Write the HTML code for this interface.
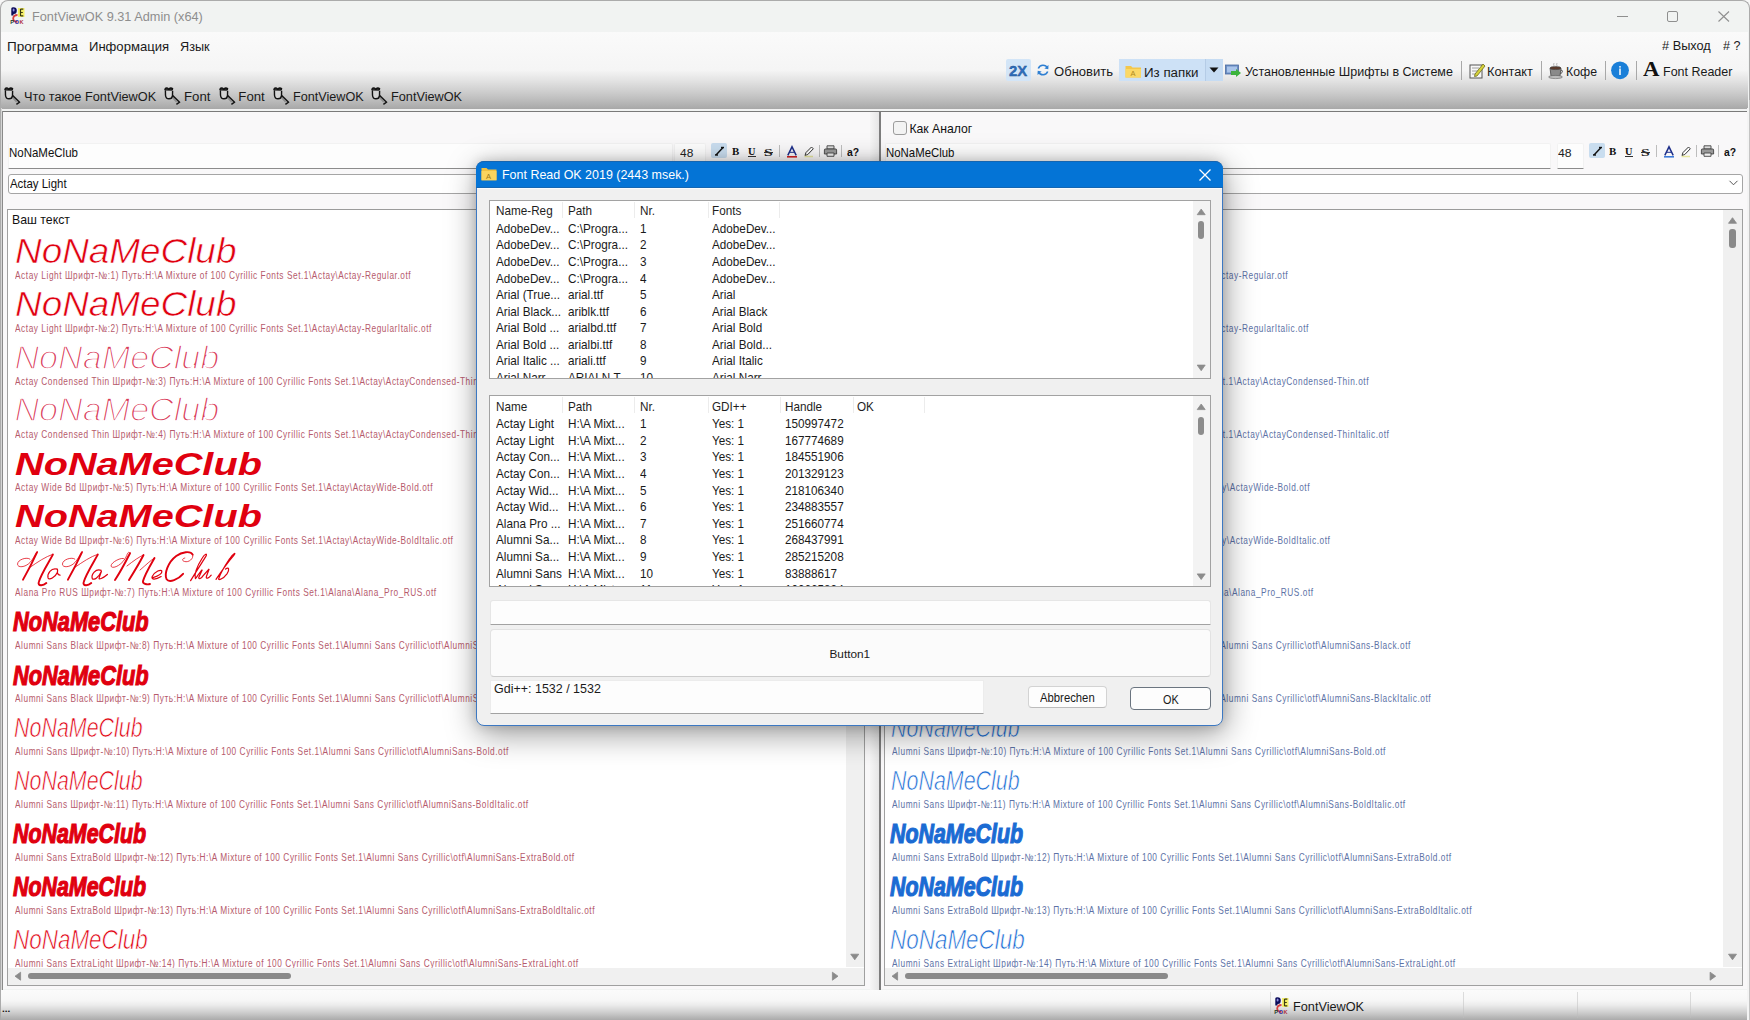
<!DOCTYPE html>
<html><head><meta charset="utf-8"><title>FontViewOK</title>
<style>
html,body{margin:0;padding:0;}
body{width:1750px;height:1020px;overflow:hidden;position:relative;background:#f2f2f2;font-family:'Liberation Sans',sans-serif;}
.t{position:absolute;white-space:pre;}
svg{position:absolute;overflow:visible;}
</style></head><body>
<div style='position:absolute;left:0.00px;top:0.00px;width:1750.00px;height:1020.00px;background:#f7f7f7;'></div>
<div style='position:absolute;left:0.00px;top:0.00px;width:1750.00px;height:1020.00px;border:1px solid #ababab;border-bottom:none;border-radius:8px 8px 0 0;box-sizing:border-box;background:#f1f3f2;'></div>
<div style='position:absolute;left:1.00px;top:32.00px;width:1747.00px;height:76.70px;background:linear-gradient(to bottom,#fafafa 0px,#f5f5f5 38px,#e4e4e4 48px,#cdcdcd 60px,#b8b8b8 70px,#a8a8a8 76.7px);'></div>
<div style='position:absolute;left:1.00px;top:108.70px;width:1747.00px;height:1.30px;background:#f2f2f2;'></div>
<div style='position:absolute;left:2.00px;top:110.50px;width:1745.50px;height:1.50px;background:#7a7a7a;'></div>
<svg style='left:9.5px;top:6.8px' width='17' height='18' viewBox='0 0 17 18'>
<path d='M1.3 8.5 L1.3 1.5 Q1.3 0.2 3.5 0.2 Q6.8 0.2 6.8 3.5 Q6.8 7 3.8 7 L3.5 7 L3.5 8.5 Z' fill='#0c0c5a'/>
<ellipse cx='3.6' cy='3' rx='1' ry='1.6' fill='#8f8fe0'/>
<rect x='8' y='1' width='6.5' height='9' fill='#f5f06a'/>
<path d='M10.5 2 L10.5 9 M10.5 2.2 L13.3 2.2 M10.5 5.5 L12.8 5.5 M10.5 8.8 L13.3 8.8' stroke='#3a3a10' stroke-width='1.2'/>
<path d='M7.5 8 Q3.2 8 3.2 11.5 Q3.2 15 7.5 14.8' stroke='#d84040' stroke-width='1.8' fill='none'/>
<text x='0.2' y='17.3' font-size='5.6' font-family='Liberation Sans' font-weight='700' fill='#1a3a2a'>P</text>
<text x='4.8' y='17.3' font-size='5.6' font-family='Liberation Sans' font-weight='700' fill='#2a2aa0'>O</text>
<text x='9.6' y='17.3' font-size='5.6' font-family='Liberation Sans' font-weight='700' fill='#b03040'>K</text>
</svg>
<div class=t style="left:31.98px;top:10px;font-size:13.37px;line-height:13.37px;color:#8e8e8e;font-family:'Liberation Sans',sans-serif;transform:scaleX(0.9520);transform-origin:0 0;">FontViewOK 9.31 Admin (x64)</div>
<div style='position:absolute;left:1617.00px;top:16.00px;width:11.00px;height:1.00px;background:#8f8f8f;'></div>
<div style='position:absolute;left:1666.50px;top:11.20px;width:11.10px;height:10.60px;border:1px solid #8f8f8f;border-radius:2px;box-sizing:border-box;'></div>
<svg style='left:1718px;top:11px' width='12' height='11' viewBox='0 0 12 11'><path d='M0.5 0.5 L11 10.5 M11 0.5 L0.5 10.5' stroke='#8f8f8f' stroke-width='1.1' fill='none'/></svg>
<div class=t style="left:7.22px;top:41px;font-size:12.52px;line-height:12.52px;color:#1a1a1a;font-family:'Liberation Sans',sans-serif;transform:scaleX(1.0815);transform-origin:0 0;">Программа</div>
<div class=t style="left:89.25px;top:41px;font-size:12.52px;line-height:12.52px;color:#1a1a1a;font-family:'Liberation Sans',sans-serif;transform:scaleX(1.0445);transform-origin:0 0;">Информация</div>
<div class=t style="left:180.29px;top:41px;font-size:12.52px;line-height:12.52px;color:#1a1a1a;font-family:'Liberation Sans',sans-serif;transform:scaleX(1.0101);transform-origin:0 0;">Язык</div>
<div class=t style="left:1662.40px;top:40px;font-size:12.52px;line-height:12.52px;color:#1a1a1a;font-family:'Liberation Sans',sans-serif;transform:scaleX(1.0183);transform-origin:0 0;"># Выход</div>
<div class=t style="left:1723.00px;top:40px;font-size:12.52px;line-height:12.52px;color:#1a1a1a;font-family:'Liberation Sans',sans-serif;transform:scaleX(1.0030);transform-origin:0 0;"># ?</div>
<div style='position:absolute;left:1006.20px;top:59.00px;width:25.30px;height:22.00px;background:#d3e5f7;border-radius:2px;'></div>
<div class=t style="left:1008.85px;top:63px;font-size:15.50px;line-height:15.50px;color:#2f6fc0;font-family:'Liberation Sans',sans-serif;font-weight:700;transform:scaleX(0.9570);transform-origin:0 0;-webkit-text-stroke:0.4px #24508a;">2X</div>
<svg style='left:1036px;top:63px' width='14' height='14' viewBox='0 0 14 14'>
<path d='M11.5 5.2 A5 5 0 0 0 2.3 5.5' stroke='#2f7fd2' stroke-width='1.6' fill='none'/>
<path d='M2.5 8.8 A5 5 0 0 0 11.7 8.5' stroke='#2f7fd2' stroke-width='1.6' fill='none'/>
<path d='M12.5 2 L12.3 6.2 L8.4 5.6 Z' fill='#2f7fd2'/><path d='M1.5 12 L1.7 7.8 L5.6 8.4 Z' fill='#2f7fd2'/></svg>
<div class=t style="left:1054.38px;top:65px;font-size:13.23px;line-height:13.23px;color:#1a1a1a;font-family:'Liberation Sans',sans-serif;transform:scaleX(0.9876);transform-origin:0 0;">Обновить</div>
<div style='position:absolute;left:1118.70px;top:59.00px;width:86.30px;height:22.00px;background:#cde1f6;'></div>
<div style='position:absolute;left:1205.50px;top:59.00px;width:17.50px;height:22.00px;background:#c6dcf3;'></div>
<div style='position:absolute;left:1205.00px;top:59.00px;width:1.00px;height:22.00px;background:#b5cce6;'></div>
<svg style='left:1125px;top:64px' width='17' height='14' viewBox='0 0 17 14'>
<path d='M0.5 2 L6 2 L7.5 3.5 L16 3.5 L16 13.5 L0.5 13.5 Z' fill='#f3c74c'/><path d='M0.5 5 L16 5 L16 13.5 L0.5 13.5 Z' fill='#fbd866'/>
<text x='5.5' y='12' font-size='7.5' font-family='Liberation Sans' fill='#b08a20'>A</text></svg>
<div class=t style="left:1144.33px;top:66px;font-size:13.23px;line-height:13.23px;color:#1a1a1a;font-family:'Liberation Sans',sans-serif;transform:scaleX(1.0087);transform-origin:0 0;">Из папки</div>
<svg style='left:1209px;top:67px' width='10' height='6' viewBox='0 0 10 6'><path d='M0.5 0.5 L9.5 0.5 L5 5.5 Z' fill='#111'/></svg>
<svg style='left:1225px;top:64px' width='17' height='14' viewBox='0 0 17 14'>
<rect x='0.5' y='1' width='13' height='9' fill='#6c8fc4' stroke='#4a6aa0' stroke-width='0.8'/>
<rect x='2' y='2.5' width='10' height='6' fill='#a9c4ea'/>
<path d='M6 7 L11 7 L11 5 L16 9 L11 13 L11 11 L6 11 Z' fill='#3cb43c'/></svg>
<div class=t style="left:1245.35px;top:65px;font-size:13.23px;line-height:13.23px;color:#1a1a1a;font-family:'Liberation Sans',sans-serif;transform:scaleX(0.9472);transform-origin:0 0;">Установленные Шрифты в Системе</div>
<div style='position:absolute;left:1461.00px;top:61.00px;width:1.00px;height:19.00px;background:#a8a8a8;'></div>
<svg style='left:1469px;top:62px' width='17' height='17' viewBox='0 0 17 17'>
<rect x='1' y='3' width='12' height='13' fill='#f8f8f8' stroke='#555' stroke-width='1'/>
<path d='M3 6 L10 6 M3 9 L10 9 M3 12 L8 12' stroke='#888' stroke-width='0.8'/>
<path d='M6 12 L14 2 L16 4 L8 14 L5.5 14.5 Z' fill='#d7d23a' stroke='#6a6a20' stroke-width='0.8'/></svg>
<div class=t style="left:1486.88px;top:65px;font-size:13.23px;line-height:13.23px;color:#1a1a1a;font-family:'Liberation Sans',sans-serif;transform:scaleX(0.9641);transform-origin:0 0;">Контакт</div>
<div style='position:absolute;left:1540.50px;top:61.00px;width:1.00px;height:19.00px;background:#a8a8a8;'></div>
<svg style='left:1548px;top:62px' width='17' height='17' viewBox='0 0 17 17'>
<path d='M2 6 L13 6 L12 14 L3 14 Z' fill='#8a8a8a' stroke='#444' stroke-width='0.8'/>
<ellipse cx='7.5' cy='6' rx='5.5' ry='1.6' fill='#5a3a2a' stroke='#444' stroke-width='0.6'/>
<path d='M13 8 Q16 8.5 12.5 12' stroke='#444' stroke-width='1' fill='none'/>
<ellipse cx='7.5' cy='15' rx='7' ry='1.6' fill='#bbb' stroke='#666' stroke-width='0.6'/>
<path d='M6 1 Q5 3 6.5 4.5 M9 1 Q8 3 9.5 4.5' stroke='#999' stroke-width='0.7' fill='none'/></svg>
<div class=t style="left:1566.41px;top:65px;font-size:13.23px;line-height:13.23px;color:#1a1a1a;font-family:'Liberation Sans',sans-serif;transform:scaleX(0.9317);transform-origin:0 0;">Кофе</div>
<div style='position:absolute;left:1605.30px;top:61.00px;width:1.00px;height:19.00px;background:#a8a8a8;'></div>
<svg style='left:1611px;top:61.8px' width='18' height='18' viewBox='0 0 18 18'>
<circle cx='9' cy='8.3' r='8.9' fill='#1a7fd8'/><path d='M9 6.6 L9 13' stroke='#fff' stroke-width='1.5'/><circle cx='9' cy='4.8' r='0.9' fill='#fff'/></svg>
<div style='position:absolute;left:1636.00px;top:61.00px;width:1.00px;height:19.00px;background:#a8a8a8;'></div>
<div class=t style="left:1643.00px;top:60px;font-size:19.91px;line-height:19.91px;color:#111;font-family:'Liberation Serif',sans-serif;font-weight:700;transform:scaleX(1.1438);transform-origin:0 0;">A</div>
<div class=t style="left:1662.50px;top:65px;font-size:13.37px;line-height:13.37px;color:#1a1a1a;font-family:'Liberation Sans',sans-serif;transform:scaleX(0.9346);transform-origin:0 0;">Font Reader</div>
<svg style='left:4px;top:86.6px' width='17' height='18' viewBox='0 0 17 18'>
<path d='M0.9 2.6 Q1.3 0.4 3.6 1.2 L4.8 2.2 Q6.6 0.2 8.6 1.6 Q8.4 3.8 5.4 3.4 L4.4 3.2 Q2 4.2 0.9 2.6 Z' fill='#333' stroke='#111' stroke-width='1.3'/>
<path d='M1.4 3.6 L1.5 8.2 Q1.8 11.8 5 11.8 Q8.2 11.8 8.5 8.6 L8.6 3.8' fill='#d4d4d4' stroke='#111' stroke-width='1.4'/>
<path d='M8.4 8.4 L15.6 15.2 L12.4 17.3' fill='none' stroke='#151515' stroke-width='1.5' stroke-linejoin='round'/>
<path d='M8.6 10.8 L12.6 15' stroke='#8a8a8a' stroke-width='1.1'/>
</svg>
<svg style='left:164px;top:86.6px' width='17' height='18' viewBox='0 0 17 18'>
<path d='M0.9 2.6 Q1.3 0.4 3.6 1.2 L4.8 2.2 Q6.6 0.2 8.6 1.6 Q8.4 3.8 5.4 3.4 L4.4 3.2 Q2 4.2 0.9 2.6 Z' fill='#333' stroke='#111' stroke-width='1.3'/>
<path d='M1.4 3.6 L1.5 8.2 Q1.8 11.8 5 11.8 Q8.2 11.8 8.5 8.6 L8.6 3.8' fill='#d4d4d4' stroke='#111' stroke-width='1.4'/>
<path d='M8.4 8.4 L15.6 15.2 L12.4 17.3' fill='none' stroke='#151515' stroke-width='1.5' stroke-linejoin='round'/>
<path d='M8.6 10.8 L12.6 15' stroke='#8a8a8a' stroke-width='1.1'/>
</svg>
<svg style='left:218.6px;top:86.6px' width='17' height='18' viewBox='0 0 17 18'>
<path d='M0.9 2.6 Q1.3 0.4 3.6 1.2 L4.8 2.2 Q6.6 0.2 8.6 1.6 Q8.4 3.8 5.4 3.4 L4.4 3.2 Q2 4.2 0.9 2.6 Z' fill='#333' stroke='#111' stroke-width='1.3'/>
<path d='M1.4 3.6 L1.5 8.2 Q1.8 11.8 5 11.8 Q8.2 11.8 8.5 8.6 L8.6 3.8' fill='#d4d4d4' stroke='#111' stroke-width='1.4'/>
<path d='M8.4 8.4 L15.6 15.2 L12.4 17.3' fill='none' stroke='#151515' stroke-width='1.5' stroke-linejoin='round'/>
<path d='M8.6 10.8 L12.6 15' stroke='#8a8a8a' stroke-width='1.1'/>
</svg>
<svg style='left:272.9px;top:86.6px' width='17' height='18' viewBox='0 0 17 18'>
<path d='M0.9 2.6 Q1.3 0.4 3.6 1.2 L4.8 2.2 Q6.6 0.2 8.6 1.6 Q8.4 3.8 5.4 3.4 L4.4 3.2 Q2 4.2 0.9 2.6 Z' fill='#333' stroke='#111' stroke-width='1.3'/>
<path d='M1.4 3.6 L1.5 8.2 Q1.8 11.8 5 11.8 Q8.2 11.8 8.5 8.6 L8.6 3.8' fill='#d4d4d4' stroke='#111' stroke-width='1.4'/>
<path d='M8.4 8.4 L15.6 15.2 L12.4 17.3' fill='none' stroke='#151515' stroke-width='1.5' stroke-linejoin='round'/>
<path d='M8.6 10.8 L12.6 15' stroke='#8a8a8a' stroke-width='1.1'/>
</svg>
<svg style='left:371.4px;top:86.6px' width='17' height='18' viewBox='0 0 17 18'>
<path d='M0.9 2.6 Q1.3 0.4 3.6 1.2 L4.8 2.2 Q6.6 0.2 8.6 1.6 Q8.4 3.8 5.4 3.4 L4.4 3.2 Q2 4.2 0.9 2.6 Z' fill='#333' stroke='#111' stroke-width='1.3'/>
<path d='M1.4 3.6 L1.5 8.2 Q1.8 11.8 5 11.8 Q8.2 11.8 8.5 8.6 L8.6 3.8' fill='#d4d4d4' stroke='#111' stroke-width='1.4'/>
<path d='M8.4 8.4 L15.6 15.2 L12.4 17.3' fill='none' stroke='#151515' stroke-width='1.5' stroke-linejoin='round'/>
<path d='M8.6 10.8 L12.6 15' stroke='#8a8a8a' stroke-width='1.1'/>
</svg>
<div class=t style="left:24.31px;top:90px;font-size:13.23px;line-height:13.23px;color:#1a1a1a;font-family:'Liberation Sans',sans-serif;transform:scaleX(0.9629);transform-origin:0 0;">Что такое FontViewOK</div>
<div class=t style="left:184.04px;top:90px;font-size:13.23px;line-height:13.23px;color:#1a1a1a;font-family:'Liberation Sans',sans-serif;">Font</div>
<div class=t style="left:238.34px;top:90px;font-size:13.23px;line-height:13.23px;color:#1a1a1a;font-family:'Liberation Sans',sans-serif;">Font</div>
<div class=t style="left:292.69px;top:90px;font-size:13.23px;line-height:13.23px;color:#1a1a1a;font-family:'Liberation Sans',sans-serif;transform:scaleX(0.9565);transform-origin:0 0;">FontViewOK</div>
<div class=t style="left:390.98px;top:90px;font-size:13.23px;line-height:13.23px;color:#1a1a1a;font-family:'Liberation Sans',sans-serif;transform:scaleX(0.9606);transform-origin:0 0;">FontViewOK</div>
<div style='position:absolute;left:1.00px;top:112.00px;width:1747.00px;height:877.00px;background:#f9f8f9;'></div>
<div style='position:absolute;left:0.80px;top:108.00px;width:1.20px;height:892.00px;background:#d6d6d6;'></div>
<div style='position:absolute;left:2.00px;top:111.00px;width:1.20px;height:878.50px;background:#8a8a8a;'></div>
<div style='position:absolute;left:869.50px;top:112.00px;width:9.50px;height:879.00px;background:linear-gradient(to right,#f6f6f6,#e6e6e6);'></div>
<div style='position:absolute;left:879.00px;top:112.00px;width:2.00px;height:879.00px;background:#7d7d7d;'></div>
<div style='position:absolute;left:1747.00px;top:108.00px;width:1.50px;height:912.00px;background:#f4f4f4;'></div>
<div style='position:absolute;left:1748.50px;top:100.00px;width:1.50px;height:920.00px;background:#c4c4c4;'></div>
<div style='position:absolute;left:8.00px;top:142.50px;width:665.00px;height:26.30px;background:#fdfdfd;border:1px solid #f2f2f2;border-bottom:1px solid #8c8c8c;box-sizing:border-box;border-radius:2px 2px 0 0;'></div>
<div class=t style="left:8.58px;top:147px;font-size:12.38px;line-height:12.38px;color:#111;font-family:'Liberation Sans',sans-serif;transform:scaleX(0.9280);transform-origin:0 0;">NoNaMeClub</div>
<div style='position:absolute;left:674.40px;top:142.50px;width:31.80px;height:26.30px;background:#fdfdfd;border:1px solid #f2f2f2;border-bottom:1px solid #8c8c8c;box-sizing:border-box;border-radius:2px 2px 0 0;'></div>
<div class=t style="left:680.16px;top:148px;font-size:11.10px;line-height:11.10px;color:#222;font-family:'Liberation Sans',sans-serif;transform:scaleX(1.0752);transform-origin:0 0;">48</div>
<div style='position:absolute;left:711.40px;top:143.30px;width:16.10px;height:15.10px;background:#c9ddef;border-radius:2px;'></div>
<svg style='left:714.4px;top:146px' width='11' height='10' viewBox='0 0 11 10'><path d='M1 9 L3 9 L10 1.5 L8 1.5 Z' fill='#111'/><path d='M1 9 L4 9' stroke='#111' stroke-width='1.4'/><path d='M7 1.5 L10 1.5' stroke='#111' stroke-width='1.4'/></svg>
<div class=t style="left:732.19px;top:147px;font-size:10.53px;line-height:10.53px;color:#111;font-family:'Liberation Serif',sans-serif;font-weight:700;transform:scaleX(1.0405);transform-origin:0 0;">B</div>
<div class=t style="left:748.19px;top:147px;font-size:9.96px;line-height:9.96px;color:#111;font-family:'Liberation Serif',sans-serif;font-weight:700;transform:scaleX(1.0338);transform-origin:0 0;">U</div>
<div style='position:absolute;left:748.20px;top:155.80px;width:7.60px;height:1.00px;background:#333;'></div>
<div class=t style="left:764.21px;top:148px;font-size:10.53px;line-height:10.53px;color:#222;font-family:'Liberation Serif',sans-serif;font-weight:700;transform:scaleX(1.4957);transform-origin:0 0;">S</div>
<div style='position:absolute;left:764.20px;top:151.80px;width:9.20px;height:0.90px;background:#333;'></div>
<div style='position:absolute;left:779.20px;top:145.00px;width:1.00px;height:12.00px;background:#bdbdbd;'></div>
<svg style='left:786.5px;top:146px' width='10' height='12' viewBox='0 0 10 12'><path d='M0.8 9.3 L5 0.8 L9.2 9.3' fill='none' stroke='#1e2f8a' stroke-width='1.5'/><path d='M2.8 6.3 L7.2 6.3' stroke='#1e2f8a' stroke-width='1'/><path d='M0 10.8 L10 10.8' stroke='#d02020' stroke-width='1.6'/></svg>
<svg style='left:803.5px;top:145.5px' width='10' height='11' viewBox='0 0 10 11'><path d='M1 9.5 L2 6.5 L7.5 1 L9.3 2.8 L3.8 8.5 Z' fill='#fff' stroke='#333' stroke-width='1'/><path d='M0.5 10.5 L9 10.5' stroke='#e8e8a0' stroke-width='1.5'/></svg>
<div style='position:absolute;left:818.50px;top:145.00px;width:1.00px;height:12.00px;background:#bdbdbd;'></div>
<svg style='left:823.8px;top:145px' width='13' height='12' viewBox='0 0 13 12'><path d='M3 0.8 L10 0.8 L10 4 L3 4 Z' fill='#ddd' stroke='#444' stroke-width='0.9'/><path d='M1 4 L12 4 Q12.6 4 12.6 5 L12.6 9 L0.4 9 L0.4 5 Q0.4 4 1 4 Z' fill='#999' stroke='#444' stroke-width='0.9'/><path d='M3 8 L10 8 L10 11.3 L3 11.3 Z' fill='#eee' stroke='#444' stroke-width='0.9'/></svg>
<div style='position:absolute;left:840.50px;top:145.00px;width:1.00px;height:12.00px;background:#bdbdbd;'></div>
<div class=t style="left:847.09px;top:147px;font-size:11.81px;line-height:11.81px;color:#111;font-family:'Liberation Sans',sans-serif;font-weight:700;transform:scaleX(0.8809);transform-origin:0 0;">a?</div>
<div style='position:absolute;left:7.70px;top:174.40px;width:858.10px;height:19.40px;background:#fff;border:1px solid #a5a5a5;box-sizing:border-box;border-radius:3px;'></div>
<div class=t style="left:9.70px;top:178px;font-size:12.80px;line-height:12.80px;color:#111;font-family:'Liberation Sans',sans-serif;transform:scaleX(0.8933);transform-origin:0 0;">Actay Light</div>
<div style='position:absolute;left:7.30px;top:208.80px;width:857.50px;height:777.50px;background:#fff;border:1px solid #a0a0a0;border-top-color:#9b9b9b;box-sizing:border-box;'></div>
<div class=t style="left:12.12px;top:214px;font-size:12.52px;line-height:12.52px;color:#111;font-family:'Liberation Sans',sans-serif;transform:scaleX(0.9828);transform-origin:0 0;">Ваш текст</div>
<div class=t style="left:14.89px;top:233px;font-size:35.14px;line-height:35.14px;color:#e0000f;font-family:'Liberation Sans',sans-serif;font-style:italic;transform:scaleX(1.0501);transform-origin:0 0;-webkit-text-stroke:0.6px #fff;">NoNaMeClub</div>
<div class=t style="left:14.90px;top:271px;font-size:10.38px;line-height:10.38px;color:#b65a6c;font-family:'Liberation Sans',sans-serif;transform:scaleX(0.8000);transform-origin:0 0;letter-spacing:0.681px;">Actay Light Шрифт-№:1) Путь:H:\A Mixture of 100 Cyrillic Fonts Set.1\Actay\Actay-Regular.otf</div>
<div class=t style="left:14.89px;top:286px;font-size:35.14px;line-height:35.14px;color:#e0000f;font-family:'Liberation Sans',sans-serif;font-style:italic;transform:scaleX(1.0501);transform-origin:0 0;-webkit-text-stroke:0.6px #fff;">NoNaMeClub</div>
<div class=t style="left:14.90px;top:324px;font-size:10.38px;line-height:10.38px;color:#b65a6c;font-family:'Liberation Sans',sans-serif;transform:scaleX(0.8000);transform-origin:0 0;letter-spacing:0.681px;">Actay Light Шрифт-№:2) Путь:H:\A Mixture of 100 Cyrillic Fonts Set.1\Actay\Actay-RegularItalic.otf</div>
<div class=t style="left:14.48px;top:340px;font-size:34.14px;line-height:34.14px;color:#d83a58;font-family:'Liberation Sans',sans-serif;font-style:italic;-webkit-text-stroke:1.5px #fff;paint-order:fill stroke;">NoNaMeClub</div>
<div class=t style="left:14.90px;top:377px;font-size:10.38px;line-height:10.38px;color:#b65a6c;font-family:'Liberation Sans',sans-serif;transform:scaleX(0.8000);transform-origin:0 0;letter-spacing:0.681px;">Actay Condensed Thin Шрифт-№:3) Путь:H:\A Mixture of 100 Cyrillic Fonts Set.1\Actay\ActayCondensed-Thin.otf</div>
<div class=t style="left:14.48px;top:392px;font-size:34.14px;line-height:34.14px;color:#d83a58;font-family:'Liberation Sans',sans-serif;font-style:italic;-webkit-text-stroke:1.5px #fff;paint-order:fill stroke;">NoNaMeClub</div>
<div class=t style="left:14.90px;top:430px;font-size:10.38px;line-height:10.38px;color:#b65a6c;font-family:'Liberation Sans',sans-serif;transform:scaleX(0.8000);transform-origin:0 0;letter-spacing:0.681px;">Actay Condensed Thin Шрифт-№:4) Путь:H:\A Mixture of 100 Cyrillic Fonts Set.1\Actay\ActayCondensed-ThinItalic.otf</div>
<div class=t style="left:15.10px;top:448px;font-size:32.15px;line-height:32.15px;color:#e0000f;font-family:'Liberation Sans',sans-serif;font-weight:700;font-style:italic;transform:scaleX(1.2344);transform-origin:0 0;">NoNaMeClub</div>
<div class=t style="left:14.90px;top:483px;font-size:10.38px;line-height:10.38px;color:#b65a6c;font-family:'Liberation Sans',sans-serif;transform:scaleX(0.8000);transform-origin:0 0;letter-spacing:0.681px;">Actay Wide Bd Шрифт-№:5) Путь:H:\A Mixture of 100 Cyrillic Fonts Set.1\Actay\ActayWide-Bold.otf</div>
<div class=t style="left:15.10px;top:500px;font-size:32.15px;line-height:32.15px;color:#e0000f;font-family:'Liberation Sans',sans-serif;font-weight:700;font-style:italic;transform:scaleX(1.2344);transform-origin:0 0;">NoNaMeClub</div>
<div class=t style="left:14.90px;top:536px;font-size:10.38px;line-height:10.38px;color:#b65a6c;font-family:'Liberation Sans',sans-serif;transform:scaleX(0.8000);transform-origin:0 0;letter-spacing:0.681px;">Actay Wide Bd Шрифт-№:6) Путь:H:\A Mixture of 100 Cyrillic Fonts Set.1\Actay\ActayWide-BoldItalic.otf</div>
<svg style='left:0;top:0' width='1' height='1'><g transform='translate(10,545) scale(0.06857)' fill='none' stroke='#e0000f' stroke-linecap='round'>
<path d='M 290 205 C 250 170, 110 210, 110 280 C 110 340, 250 330, 320 220 C 360 160, 380 110, 395 100' stroke-width='11'/>
<path d='M 395 105 C 330 250, 250 400, 190 505' stroke-width='28'/>
<path d='M 300 320 C 400 250, 520 170, 625 135' stroke-width='11'/>
<path d='M 625 140 C 560 260, 450 430, 420 540 C 400 600, 480 600, 530 555' stroke-width='28'/>
<path d='M 680 350 C 600 330, 540 420, 555 480 C 570 520, 660 470, 690 400 C 700 370, 690 340, 680 350 M 690 400 Q 700 440 730 440' stroke-width='18'/>
<g transform='translate(655,0)'>
<path d='M 290 205 C 250 170, 110 210, 110 280 C 110 340, 250 330, 320 220 C 360 160, 380 110, 395 100' stroke-width='11'/>
<path d='M 395 105 C 330 250, 250 400, 190 505' stroke-width='28'/>
<path d='M 300 320 C 400 250, 520 170, 625 135' stroke-width='11'/>
<path d='M 625 140 C 560 260, 450 430, 420 540 C 400 600, 480 600, 530 555' stroke-width='28'/>
</g>
<path d='M 1330 370 C 1250 340, 1180 430, 1200 490 C 1220 520, 1300 470, 1335 380 L 1300 480 C 1290 510, 1350 490, 1420 430' stroke-width='18'/>
</g>
<g transform='translate(120,545) scale(0.06857)' fill='none' stroke='#e0000f' stroke-linecap='round'>
<path d='M 60 200 C 30 170, -131 250, -131 306 C -120 360, 40 300, 100 150 C 110 110, 130 90, 146 120' stroke-width='11'/>
<path d='M 146 120 C 80 250, 0 400, -73 510' stroke-width='28'/>
<path d='M 102 306 C 200 230, 280 170, 343 146' stroke-width='11'/>
<path d='M 343 146 C 280 270, 200 400, 131 510' stroke-width='28'/>
<path d='M 292 365 C 380 290, 450 220, 503 190' stroke-width='11'/>
<path d='M 503 190 C 440 300, 360 430, 335 530 C 330 570, 400 580, 437 569' stroke-width='28'/>
<path d='M 470 480 C 530 460, 620 420, 610 380 C 600 350, 510 380, 470 460 C 450 510, 520 510, 600 460' stroke-width='18'/>
<path d='M 1060 140 C 1030 80, 900 100, 820 160 C 700 250, 640 420, 680 500 C 720 560, 850 500, 920 420' stroke-width='28'/>
<path d='M 1060 140 C 1080 200, 1000 260, 940 240 C 900 230, 905 195, 945 190' stroke-width='11'/>
<path d='M 1030 520 C 1100 400, 1200 250, 1250 170 C 1280 120, 1240 120, 1200 190 C 1130 300, 1080 420, 1100 490' stroke-width='18'/>
<path d='M 1110 480 C 1150 420, 1180 380, 1200 360 L 1150 470 C 1140 500, 1180 500, 1210 450 L 1300 350 L 1260 460 C 1250 500, 1290 490, 1330 440' stroke-width='18'/>
<path d='M 1400 500 C 1480 380, 1600 220, 1660 150 C 1700 100, 1650 120, 1600 200 C 1520 320, 1460 420, 1440 490 C 1430 520, 1500 500, 1560 420 C 1600 360, 1590 310, 1540 350' stroke-width='18'/>
</g></svg>
<div class=t style="left:14.90px;top:588px;font-size:10.38px;line-height:10.38px;color:#b65a6c;font-family:'Liberation Sans',sans-serif;transform:scaleX(0.8000);transform-origin:0 0;letter-spacing:0.681px;">Alana Pro RUS Шрифт-№:7) Путь:H:\A Mixture of 100 Cyrillic Fonts Set.1\Alana\Alana_Pro_RUS.otf</div>
<div class=t style="left:13.18px;top:607px;font-size:28.45px;line-height:28.45px;color:#e0000f;font-family:'Liberation Sans',sans-serif;font-weight:700;font-style:italic;transform:scaleX(0.7664);transform-origin:0 0;-webkit-text-stroke:1.2px #e0000f;">NoNaMeClub</div>
<div class=t style="left:14.90px;top:641px;font-size:10.38px;line-height:10.38px;color:#b65a6c;font-family:'Liberation Sans',sans-serif;transform:scaleX(0.8000);transform-origin:0 0;letter-spacing:0.681px;">Alumni Sans Black Шрифт-№:8) Путь:H:\A Mixture of 100 Cyrillic Fonts Set.1\Alumni Sans Cyrillic\otf\AlumniSans-Black.otf</div>
<div class=t style="left:13.18px;top:661px;font-size:28.45px;line-height:28.45px;color:#e0000f;font-family:'Liberation Sans',sans-serif;font-weight:700;font-style:italic;transform:scaleX(0.7664);transform-origin:0 0;-webkit-text-stroke:1.2px #e0000f;">NoNaMeClub</div>
<div class=t style="left:14.90px;top:694px;font-size:10.38px;line-height:10.38px;color:#b65a6c;font-family:'Liberation Sans',sans-serif;transform:scaleX(0.8000);transform-origin:0 0;letter-spacing:0.681px;">Alumni Sans Black Шрифт-№:9) Путь:H:\A Mixture of 100 Cyrillic Fonts Set.1\Alumni Sans Cyrillic\otf\AlumniSans-BlackItalic.otf</div>
<div class=t style="left:13.86px;top:715px;font-size:27.03px;line-height:27.03px;color:#e0000f;font-family:'Liberation Sans',sans-serif;font-style:italic;transform:scaleX(0.7934);transform-origin:0 0;-webkit-text-stroke:0.7px #fff;">NoNaMeClub</div>
<div class=t style="left:14.90px;top:747px;font-size:10.38px;line-height:10.38px;color:#b65a6c;font-family:'Liberation Sans',sans-serif;transform:scaleX(0.8000);transform-origin:0 0;letter-spacing:0.681px;">Alumni Sans Шрифт-№:10) Путь:H:\A Mixture of 100 Cyrillic Fonts Set.1\Alumni Sans Cyrillic\otf\AlumniSans-Bold.otf</div>
<div class=t style="left:13.86px;top:768px;font-size:27.03px;line-height:27.03px;color:#e0000f;font-family:'Liberation Sans',sans-serif;font-style:italic;transform:scaleX(0.7934);transform-origin:0 0;-webkit-text-stroke:0.7px #fff;">NoNaMeClub</div>
<div class=t style="left:14.90px;top:800px;font-size:10.38px;line-height:10.38px;color:#b65a6c;font-family:'Liberation Sans',sans-serif;transform:scaleX(0.8000);transform-origin:0 0;letter-spacing:0.681px;">Alumni Sans Шрифт-№:11) Путь:H:\A Mixture of 100 Cyrillic Fonts Set.1\Alumni Sans Cyrillic\otf\AlumniSans-BoldItalic.otf</div>
<div class=t style="left:13.29px;top:820px;font-size:27.74px;line-height:27.74px;color:#e0000f;font-family:'Liberation Sans',sans-serif;font-weight:700;font-style:italic;transform:scaleX(0.7715);transform-origin:0 0;-webkit-text-stroke:1.2px #e0000f;">NoNaMeClub</div>
<div class=t style="left:14.90px;top:853px;font-size:10.38px;line-height:10.38px;color:#b65a6c;font-family:'Liberation Sans',sans-serif;transform:scaleX(0.8000);transform-origin:0 0;letter-spacing:0.681px;">Alumni Sans ExtraBold Шрифт-№:12) Путь:H:\A Mixture of 100 Cyrillic Fonts Set.1\Alumni Sans Cyrillic\otf\AlumniSans-ExtraBold.otf</div>
<div class=t style="left:13.29px;top:873px;font-size:27.74px;line-height:27.74px;color:#e0000f;font-family:'Liberation Sans',sans-serif;font-weight:700;font-style:italic;transform:scaleX(0.7715);transform-origin:0 0;-webkit-text-stroke:1.2px #e0000f;">NoNaMeClub</div>
<div class=t style="left:14.90px;top:906px;font-size:10.38px;line-height:10.38px;color:#b65a6c;font-family:'Liberation Sans',sans-serif;transform:scaleX(0.8000);transform-origin:0 0;letter-spacing:0.681px;">Alumni Sans ExtraBold Шрифт-№:13) Путь:H:\A Mixture of 100 Cyrillic Fonts Set.1\Alumni Sans Cyrillic\otf\AlumniSans-ExtraBoldItalic.otf</div>
<div class=t style="left:12.83px;top:927px;font-size:27.03px;line-height:27.03px;color:#e0000f;font-family:'Liberation Sans',sans-serif;font-style:italic;transform:scaleX(0.8307);transform-origin:0 0;-webkit-text-stroke:0.7px #fff;">NoNaMeClub</div>
<div class=t style="left:14.90px;top:959px;font-size:10.38px;line-height:10.38px;color:#b65a6c;font-family:'Liberation Sans',sans-serif;transform:scaleX(0.8000);transform-origin:0 0;letter-spacing:0.681px;">Alumni Sans ExtraLight Шрифт-№:14) Путь:H:\A Mixture of 100 Cyrillic Fonts Set.1\Alumni Sans Cyrillic\otf\AlumniSans-ExtraLight.otf</div>
<div style='position:absolute;left:845.70px;top:209.80px;width:18.10px;height:757.70px;background:#f0f0f0;'></div>
<div style='position:absolute;left:8.30px;top:967.50px;width:855.50px;height:17.80px;background:#f0f0f0;'></div>
<svg style='left:0;top:0' width='1' height='1'><path d='M850.75 223.3 L858.75 223.3 L854.75 217.7 Z' fill='#8a8a8a' stroke='#8a8a8a' stroke-width='0.8' stroke-linejoin='round'/></svg>
<div style='position:absolute;left:851.65px;top:229.20px;width:6.20px;height:18.40px;background:#8a8a8a;border-radius:3px;'></div>
<svg style='left:0;top:0' width='1' height='1'><path d='M850.75 954.2 L858.75 954.2 L854.75 959.8 Z' fill='#8a8a8a' stroke='#8a8a8a' stroke-width='0.8' stroke-linejoin='round'/></svg>
<svg style='left:0;top:0' width='1' height='1'><path d='M20.6 972.2 L20.6 980.2 L15.0 976.2 Z' fill='#8a8a8a' stroke='#8a8a8a' stroke-width='0.8' stroke-linejoin='round'/></svg>
<div style='position:absolute;left:27.90px;top:973.40px;width:263.10px;height:6.00px;background:#8a8a8a;border-radius:3px;'></div>
<svg style='left:0;top:0' width='1' height='1'><path d='M832.4000000000001 972.2 L832.4000000000001 980.2 L838.0 976.2 Z' fill='#8a8a8a' stroke='#8a8a8a' stroke-width='0.8' stroke-linejoin='round'/></svg>
<div style='position:absolute;left:885.00px;top:142.50px;width:665.80px;height:26.30px;background:#fdfdfd;border:1px solid #f2f2f2;border-bottom:1px solid #8c8c8c;box-sizing:border-box;border-radius:2px 2px 0 0;'></div>
<div class=t style="left:886.49px;top:147px;font-size:12.38px;line-height:12.38px;color:#111;font-family:'Liberation Sans',sans-serif;transform:scaleX(0.9211);transform-origin:0 0;">NoNaMeClub</div>
<div style='position:absolute;left:1556.70px;top:142.50px;width:27.30px;height:26.30px;background:#fdfdfd;border:1px solid #f2f2f2;border-bottom:1px solid #8c8c8c;box-sizing:border-box;border-radius:2px 2px 0 0;'></div>
<div class=t style="left:1557.76px;top:148px;font-size:11.10px;line-height:11.10px;color:#222;font-family:'Liberation Sans',sans-serif;transform:scaleX(1.1008);transform-origin:0 0;">48</div>
<div style='position:absolute;left:1588.50px;top:143.30px;width:16.50px;height:15.10px;background:#c9ddef;border-radius:2px;'></div>
<svg style='left:1591.5px;top:146px' width='11' height='10' viewBox='0 0 11 10'><path d='M1 9 L3 9 L10 1.5 L8 1.5 Z' fill='#111'/><path d='M1 9 L4 9' stroke='#111' stroke-width='1.4'/><path d='M7 1.5 L10 1.5' stroke='#111' stroke-width='1.4'/></svg>
<div class=t style="left:1609.19px;top:147px;font-size:10.53px;line-height:10.53px;color:#111;font-family:'Liberation Serif',sans-serif;font-weight:700;transform:scaleX(1.0405);transform-origin:0 0;">B</div>
<div class=t style="left:1625.19px;top:147px;font-size:9.96px;line-height:9.96px;color:#111;font-family:'Liberation Serif',sans-serif;font-weight:700;transform:scaleX(1.0338);transform-origin:0 0;">U</div>
<div style='position:absolute;left:1625.20px;top:155.80px;width:7.60px;height:1.00px;background:#333;'></div>
<div class=t style="left:1641.21px;top:148px;font-size:10.53px;line-height:10.53px;color:#222;font-family:'Liberation Serif',sans-serif;font-weight:700;transform:scaleX(1.4957);transform-origin:0 0;">S</div>
<div style='position:absolute;left:1641.20px;top:151.80px;width:9.20px;height:0.90px;background:#333;'></div>
<div style='position:absolute;left:1656.20px;top:145.00px;width:1.00px;height:12.00px;background:#bdbdbd;'></div>
<svg style='left:1663.5px;top:146px' width='10' height='12' viewBox='0 0 10 12'><path d='M0.8 9.3 L5 0.8 L9.2 9.3' fill='none' stroke='#1e2f8a' stroke-width='1.5'/><path d='M2.8 6.3 L7.2 6.3' stroke='#1e2f8a' stroke-width='1'/><path d='M0 10.8 L10 10.8' stroke='#3d7ad8' stroke-width='1.6'/></svg>
<svg style='left:1680.5px;top:145.5px' width='10' height='11' viewBox='0 0 10 11'><path d='M1 9.5 L2 6.5 L7.5 1 L9.3 2.8 L3.8 8.5 Z' fill='#fff' stroke='#333' stroke-width='1'/><path d='M0.5 10.5 L9 10.5' stroke='#e8e8a0' stroke-width='1.5'/></svg>
<div style='position:absolute;left:1695.50px;top:145.00px;width:1.00px;height:12.00px;background:#bdbdbd;'></div>
<svg style='left:1700.8px;top:145px' width='13' height='12' viewBox='0 0 13 12'><path d='M3 0.8 L10 0.8 L10 4 L3 4 Z' fill='#ddd' stroke='#444' stroke-width='0.9'/><path d='M1 4 L12 4 Q12.6 4 12.6 5 L12.6 9 L0.4 9 L0.4 5 Q0.4 4 1 4 Z' fill='#999' stroke='#444' stroke-width='0.9'/><path d='M3 8 L10 8 L10 11.3 L3 11.3 Z' fill='#eee' stroke='#444' stroke-width='0.9'/></svg>
<div style='position:absolute;left:1717.50px;top:145.00px;width:1.00px;height:12.00px;background:#bdbdbd;'></div>
<div class=t style="left:1724.09px;top:147px;font-size:11.81px;line-height:11.81px;color:#111;font-family:'Liberation Sans',sans-serif;font-weight:700;transform:scaleX(0.8809);transform-origin:0 0;">a?</div>
<div style='position:absolute;left:884.70px;top:174.40px;width:858.10px;height:19.40px;background:#fff;border:1px solid #a5a5a5;box-sizing:border-box;border-radius:3px;'></div>
<svg style='left:1728.7px;top:180px' width='9' height='6' viewBox='0 0 9 6'><path d='M0.5 0.8 L4.5 4.8 L8.5 0.8' stroke='#555' stroke-width='1' fill='none'/></svg>
<div style='position:absolute;left:884.30px;top:208.80px;width:858.80px;height:777.50px;background:#fff;border:1px solid #a0a0a0;border-top-color:#9b9b9b;box-sizing:border-box;'></div>
<div class=t style="left:889.12px;top:214px;font-size:12.52px;line-height:12.52px;color:#111;font-family:'Liberation Sans',sans-serif;transform:scaleX(0.9828);transform-origin:0 0;">Ваш текст</div>
<div class=t style="left:891.89px;top:233px;font-size:35.14px;line-height:35.14px;color:#1b6bd3;font-family:'Liberation Sans',sans-serif;font-style:italic;transform:scaleX(1.0501);transform-origin:0 0;-webkit-text-stroke:0.6px #fff;">NoNaMeClub</div>
<div class=t style="left:891.90px;top:271px;font-size:10.38px;line-height:10.38px;color:#5d72a6;font-family:'Liberation Sans',sans-serif;transform:scaleX(0.8000);transform-origin:0 0;letter-spacing:0.681px;">Actay Light Шрифт-№:1) Путь:H:\A Mixture of 100 Cyrillic Fonts Set.1\Actay\Actay-Regular.otf</div>
<div class=t style="left:891.89px;top:286px;font-size:35.14px;line-height:35.14px;color:#1b6bd3;font-family:'Liberation Sans',sans-serif;font-style:italic;transform:scaleX(1.0501);transform-origin:0 0;-webkit-text-stroke:0.6px #fff;">NoNaMeClub</div>
<div class=t style="left:891.90px;top:324px;font-size:10.38px;line-height:10.38px;color:#5d72a6;font-family:'Liberation Sans',sans-serif;transform:scaleX(0.8000);transform-origin:0 0;letter-spacing:0.681px;">Actay Light Шрифт-№:2) Путь:H:\A Mixture of 100 Cyrillic Fonts Set.1\Actay\Actay-RegularItalic.otf</div>
<div class=t style="left:891.48px;top:340px;font-size:34.14px;line-height:34.14px;color:#2e6ccc;font-family:'Liberation Sans',sans-serif;font-style:italic;-webkit-text-stroke:1.5px #fff;paint-order:fill stroke;">NoNaMeClub</div>
<div class=t style="left:891.90px;top:377px;font-size:10.38px;line-height:10.38px;color:#5d72a6;font-family:'Liberation Sans',sans-serif;transform:scaleX(0.8000);transform-origin:0 0;letter-spacing:0.681px;">Actay Condensed Thin Шрифт-№:3) Путь:H:\A Mixture of 100 Cyrillic Fonts Set.1\Actay\ActayCondensed-Thin.otf</div>
<div class=t style="left:891.48px;top:392px;font-size:34.14px;line-height:34.14px;color:#2e6ccc;font-family:'Liberation Sans',sans-serif;font-style:italic;-webkit-text-stroke:1.5px #fff;paint-order:fill stroke;">NoNaMeClub</div>
<div class=t style="left:891.90px;top:430px;font-size:10.38px;line-height:10.38px;color:#5d72a6;font-family:'Liberation Sans',sans-serif;transform:scaleX(0.8000);transform-origin:0 0;letter-spacing:0.681px;">Actay Condensed Thin Шрифт-№:4) Путь:H:\A Mixture of 100 Cyrillic Fonts Set.1\Actay\ActayCondensed-ThinItalic.otf</div>
<div class=t style="left:892.10px;top:448px;font-size:32.15px;line-height:32.15px;color:#1b6bd3;font-family:'Liberation Sans',sans-serif;font-weight:700;font-style:italic;transform:scaleX(1.2344);transform-origin:0 0;">NoNaMeClub</div>
<div class=t style="left:891.90px;top:483px;font-size:10.38px;line-height:10.38px;color:#5d72a6;font-family:'Liberation Sans',sans-serif;transform:scaleX(0.8000);transform-origin:0 0;letter-spacing:0.681px;">Actay Wide Bd Шрифт-№:5) Путь:H:\A Mixture of 100 Cyrillic Fonts Set.1\Actay\ActayWide-Bold.otf</div>
<div class=t style="left:892.10px;top:500px;font-size:32.15px;line-height:32.15px;color:#1b6bd3;font-family:'Liberation Sans',sans-serif;font-weight:700;font-style:italic;transform:scaleX(1.2344);transform-origin:0 0;">NoNaMeClub</div>
<div class=t style="left:891.90px;top:536px;font-size:10.38px;line-height:10.38px;color:#5d72a6;font-family:'Liberation Sans',sans-serif;transform:scaleX(0.8000);transform-origin:0 0;letter-spacing:0.681px;">Actay Wide Bd Шрифт-№:6) Путь:H:\A Mixture of 100 Cyrillic Fonts Set.1\Actay\ActayWide-BoldItalic.otf</div>
<svg style='left:0;top:0' width='1' height='1'><g transform='translate(887,545) scale(0.06857)' fill='none' stroke='#1b6bd3' stroke-linecap='round'>
<path d='M 290 205 C 250 170, 110 210, 110 280 C 110 340, 250 330, 320 220 C 360 160, 380 110, 395 100' stroke-width='11'/>
<path d='M 395 105 C 330 250, 250 400, 190 505' stroke-width='28'/>
<path d='M 300 320 C 400 250, 520 170, 625 135' stroke-width='11'/>
<path d='M 625 140 C 560 260, 450 430, 420 540 C 400 600, 480 600, 530 555' stroke-width='28'/>
<path d='M 680 350 C 600 330, 540 420, 555 480 C 570 520, 660 470, 690 400 C 700 370, 690 340, 680 350 M 690 400 Q 700 440 730 440' stroke-width='18'/>
<g transform='translate(655,0)'>
<path d='M 290 205 C 250 170, 110 210, 110 280 C 110 340, 250 330, 320 220 C 360 160, 380 110, 395 100' stroke-width='11'/>
<path d='M 395 105 C 330 250, 250 400, 190 505' stroke-width='28'/>
<path d='M 300 320 C 400 250, 520 170, 625 135' stroke-width='11'/>
<path d='M 625 140 C 560 260, 450 430, 420 540 C 400 600, 480 600, 530 555' stroke-width='28'/>
</g>
<path d='M 1330 370 C 1250 340, 1180 430, 1200 490 C 1220 520, 1300 470, 1335 380 L 1300 480 C 1290 510, 1350 490, 1420 430' stroke-width='18'/>
</g>
<g transform='translate(997,545) scale(0.06857)' fill='none' stroke='#1b6bd3' stroke-linecap='round'>
<path d='M 60 200 C 30 170, -131 250, -131 306 C -120 360, 40 300, 100 150 C 110 110, 130 90, 146 120' stroke-width='11'/>
<path d='M 146 120 C 80 250, 0 400, -73 510' stroke-width='28'/>
<path d='M 102 306 C 200 230, 280 170, 343 146' stroke-width='11'/>
<path d='M 343 146 C 280 270, 200 400, 131 510' stroke-width='28'/>
<path d='M 292 365 C 380 290, 450 220, 503 190' stroke-width='11'/>
<path d='M 503 190 C 440 300, 360 430, 335 530 C 330 570, 400 580, 437 569' stroke-width='28'/>
<path d='M 470 480 C 530 460, 620 420, 610 380 C 600 350, 510 380, 470 460 C 450 510, 520 510, 600 460' stroke-width='18'/>
<path d='M 1060 140 C 1030 80, 900 100, 820 160 C 700 250, 640 420, 680 500 C 720 560, 850 500, 920 420' stroke-width='28'/>
<path d='M 1060 140 C 1080 200, 1000 260, 940 240 C 900 230, 905 195, 945 190' stroke-width='11'/>
<path d='M 1030 520 C 1100 400, 1200 250, 1250 170 C 1280 120, 1240 120, 1200 190 C 1130 300, 1080 420, 1100 490' stroke-width='18'/>
<path d='M 1110 480 C 1150 420, 1180 380, 1200 360 L 1150 470 C 1140 500, 1180 500, 1210 450 L 1300 350 L 1260 460 C 1250 500, 1290 490, 1330 440' stroke-width='18'/>
<path d='M 1400 500 C 1480 380, 1600 220, 1660 150 C 1700 100, 1650 120, 1600 200 C 1520 320, 1460 420, 1440 490 C 1430 520, 1500 500, 1560 420 C 1600 360, 1590 310, 1540 350' stroke-width='18'/>
</g></svg>
<div class=t style="left:891.90px;top:588px;font-size:10.38px;line-height:10.38px;color:#5d72a6;font-family:'Liberation Sans',sans-serif;transform:scaleX(0.8000);transform-origin:0 0;letter-spacing:0.681px;">Alana Pro RUS Шрифт-№:7) Путь:H:\A Mixture of 100 Cyrillic Fonts Set.1\Alana\Alana_Pro_RUS.otf</div>
<div class=t style="left:890.18px;top:607px;font-size:28.45px;line-height:28.45px;color:#1b6bd3;font-family:'Liberation Sans',sans-serif;font-weight:700;font-style:italic;transform:scaleX(0.7664);transform-origin:0 0;-webkit-text-stroke:1.2px #1b6bd3;">NoNaMeClub</div>
<div class=t style="left:891.90px;top:641px;font-size:10.38px;line-height:10.38px;color:#5d72a6;font-family:'Liberation Sans',sans-serif;transform:scaleX(0.8000);transform-origin:0 0;letter-spacing:0.681px;">Alumni Sans Black Шрифт-№:8) Путь:H:\A Mixture of 100 Cyrillic Fonts Set.1\Alumni Sans Cyrillic\otf\AlumniSans-Black.otf</div>
<div class=t style="left:890.18px;top:661px;font-size:28.45px;line-height:28.45px;color:#1b6bd3;font-family:'Liberation Sans',sans-serif;font-weight:700;font-style:italic;transform:scaleX(0.7664);transform-origin:0 0;-webkit-text-stroke:1.2px #1b6bd3;">NoNaMeClub</div>
<div class=t style="left:891.90px;top:694px;font-size:10.38px;line-height:10.38px;color:#5d72a6;font-family:'Liberation Sans',sans-serif;transform:scaleX(0.8000);transform-origin:0 0;letter-spacing:0.681px;">Alumni Sans Black Шрифт-№:9) Путь:H:\A Mixture of 100 Cyrillic Fonts Set.1\Alumni Sans Cyrillic\otf\AlumniSans-BlackItalic.otf</div>
<div class=t style="left:890.86px;top:715px;font-size:27.03px;line-height:27.03px;color:#1b6bd3;font-family:'Liberation Sans',sans-serif;font-style:italic;transform:scaleX(0.7934);transform-origin:0 0;-webkit-text-stroke:0.7px #fff;">NoNaMeClub</div>
<div class=t style="left:891.90px;top:747px;font-size:10.38px;line-height:10.38px;color:#5d72a6;font-family:'Liberation Sans',sans-serif;transform:scaleX(0.8000);transform-origin:0 0;letter-spacing:0.681px;">Alumni Sans Шрифт-№:10) Путь:H:\A Mixture of 100 Cyrillic Fonts Set.1\Alumni Sans Cyrillic\otf\AlumniSans-Bold.otf</div>
<div class=t style="left:890.86px;top:768px;font-size:27.03px;line-height:27.03px;color:#1b6bd3;font-family:'Liberation Sans',sans-serif;font-style:italic;transform:scaleX(0.7934);transform-origin:0 0;-webkit-text-stroke:0.7px #fff;">NoNaMeClub</div>
<div class=t style="left:891.90px;top:800px;font-size:10.38px;line-height:10.38px;color:#5d72a6;font-family:'Liberation Sans',sans-serif;transform:scaleX(0.8000);transform-origin:0 0;letter-spacing:0.681px;">Alumni Sans Шрифт-№:11) Путь:H:\A Mixture of 100 Cyrillic Fonts Set.1\Alumni Sans Cyrillic\otf\AlumniSans-BoldItalic.otf</div>
<div class=t style="left:890.29px;top:820px;font-size:27.74px;line-height:27.74px;color:#1b6bd3;font-family:'Liberation Sans',sans-serif;font-weight:700;font-style:italic;transform:scaleX(0.7715);transform-origin:0 0;-webkit-text-stroke:1.2px #1b6bd3;">NoNaMeClub</div>
<div class=t style="left:891.90px;top:853px;font-size:10.38px;line-height:10.38px;color:#5d72a6;font-family:'Liberation Sans',sans-serif;transform:scaleX(0.8000);transform-origin:0 0;letter-spacing:0.681px;">Alumni Sans ExtraBold Шрифт-№:12) Путь:H:\A Mixture of 100 Cyrillic Fonts Set.1\Alumni Sans Cyrillic\otf\AlumniSans-ExtraBold.otf</div>
<div class=t style="left:890.29px;top:873px;font-size:27.74px;line-height:27.74px;color:#1b6bd3;font-family:'Liberation Sans',sans-serif;font-weight:700;font-style:italic;transform:scaleX(0.7715);transform-origin:0 0;-webkit-text-stroke:1.2px #1b6bd3;">NoNaMeClub</div>
<div class=t style="left:891.90px;top:906px;font-size:10.38px;line-height:10.38px;color:#5d72a6;font-family:'Liberation Sans',sans-serif;transform:scaleX(0.8000);transform-origin:0 0;letter-spacing:0.681px;">Alumni Sans ExtraBold Шрифт-№:13) Путь:H:\A Mixture of 100 Cyrillic Fonts Set.1\Alumni Sans Cyrillic\otf\AlumniSans-ExtraBoldItalic.otf</div>
<div class=t style="left:889.83px;top:927px;font-size:27.03px;line-height:27.03px;color:#1b6bd3;font-family:'Liberation Sans',sans-serif;font-style:italic;transform:scaleX(0.8307);transform-origin:0 0;-webkit-text-stroke:0.7px #fff;">NoNaMeClub</div>
<div class=t style="left:891.90px;top:959px;font-size:10.38px;line-height:10.38px;color:#5d72a6;font-family:'Liberation Sans',sans-serif;transform:scaleX(0.8000);transform-origin:0 0;letter-spacing:0.681px;">Alumni Sans ExtraLight Шрифт-№:14) Путь:H:\A Mixture of 100 Cyrillic Fonts Set.1\Alumni Sans Cyrillic\otf\AlumniSans-ExtraLight.otf</div>
<div style='position:absolute;left:1722.90px;top:209.80px;width:19.20px;height:757.70px;background:#f0f0f0;'></div>
<div style='position:absolute;left:885.30px;top:967.50px;width:856.80px;height:17.80px;background:#f0f0f0;'></div>
<svg style='left:0;top:0' width='1' height='1'><path d='M1728.5 223.3 L1736.5 223.3 L1732.5 217.7 Z' fill='#8a8a8a' stroke='#8a8a8a' stroke-width='0.8' stroke-linejoin='round'/></svg>
<div style='position:absolute;left:1729.40px;top:229.20px;width:6.20px;height:18.40px;background:#8a8a8a;border-radius:3px;'></div>
<svg style='left:0;top:0' width='1' height='1'><path d='M1728.5 954.2 L1736.5 954.2 L1732.5 959.8 Z' fill='#8a8a8a' stroke='#8a8a8a' stroke-width='0.8' stroke-linejoin='round'/></svg>
<svg style='left:0;top:0' width='1' height='1'><path d='M897.5999999999999 972.2 L897.5999999999999 980.2 L892.0 976.2 Z' fill='#8a8a8a' stroke='#8a8a8a' stroke-width='0.8' stroke-linejoin='round'/></svg>
<div style='position:absolute;left:904.90px;top:973.40px;width:263.10px;height:6.00px;background:#8a8a8a;border-radius:3px;'></div>
<svg style='left:0;top:0' width='1' height='1'><path d='M1710.1000000000001 972.2 L1710.1000000000001 980.2 L1715.7 976.2 Z' fill='#8a8a8a' stroke='#8a8a8a' stroke-width='0.8' stroke-linejoin='round'/></svg>
<div style='position:absolute;left:893.00px;top:121.00px;width:13.80px;height:14.30px;background:#f3f3f3;border:1px solid #9c9c9c;box-sizing:border-box;border-radius:3px;'></div>
<div class=t style="left:909.42px;top:123px;font-size:12.23px;line-height:12.23px;color:#111;font-family:'Liberation Sans',sans-serif;">Как Аналог</div>
<div style='position:absolute;left:1.00px;top:989.50px;width:1746.30px;height:30.50px;background:linear-gradient(to bottom,#fbfbfb 0px,#f7f7f7 10px,#ececec 15px,#d0d0d0 22px,#a8a8a8 30.5px);'></div>
<div style='position:absolute;left:1270.00px;top:992.00px;width:1.00px;height:26.00px;background:rgba(190,190,190,0.5);'></div>
<div style='position:absolute;left:1463.00px;top:992.00px;width:1.00px;height:26.00px;background:rgba(190,190,190,0.5);'></div>
<div style='position:absolute;left:1577.00px;top:992.00px;width:1.00px;height:26.00px;background:rgba(190,190,190,0.5);'></div>
<div style='position:absolute;left:1690.00px;top:992.00px;width:1.00px;height:26.00px;background:rgba(190,190,190,0.5);'></div>
<svg style='left:1274px;top:997px' width='17' height='18' viewBox='0 0 17 18'>
<path d='M1.3 8.5 L1.3 1.5 Q1.3 0.2 3.5 0.2 Q6.8 0.2 6.8 3.5 Q6.8 7 3.8 7 L3.5 7 L3.5 8.5 Z' fill='#0c0c5a'/>
<ellipse cx='3.6' cy='3' rx='1' ry='1.6' fill='#8f8fe0'/>
<rect x='8' y='1' width='6.5' height='9' fill='#f5f06a'/>
<path d='M10.5 2 L10.5 9 M10.5 2.2 L13.3 2.2 M10.5 5.5 L12.8 5.5 M10.5 8.8 L13.3 8.8' stroke='#3a3a10' stroke-width='1.2'/>
<path d='M7.5 8 Q3.2 8 3.2 11.5 Q3.2 15 7.5 14.8' stroke='#d84040' stroke-width='1.8' fill='none'/>
<text x='0.2' y='17.3' font-size='5.6' font-family='Liberation Sans' font-weight='700' fill='#1a3a2a'>P</text>
<text x='4.8' y='17.3' font-size='5.6' font-family='Liberation Sans' font-weight='700' fill='#2a2aa0'>O</text>
<text x='9.6' y='17.3' font-size='5.6' font-family='Liberation Sans' font-weight='700' fill='#b03040'>K</text>
</svg>
<div class=t style="left:1293.28px;top:1000px;font-size:13.23px;line-height:13.23px;color:#1a1a1a;font-family:'Liberation Sans',sans-serif;transform:scaleX(0.9606);transform-origin:0 0;">FontViewOK</div>
<div class=t style="left:2.40px;top:1004px;font-size:9.96px;line-height:9.96px;color:#111;font-family:'Liberation Sans',sans-serif;font-weight:700;transform:scaleX(0.9962);transform-origin:0 0;">...</div>
<div style='position:absolute;left:476.20px;top:161.00px;width:747.30px;height:565.00px;background:#f0f0f0;border:1px solid #3c78c2;box-sizing:border-box;border-radius:8px;box-shadow:2px 8px 32px rgba(0,0,0,0.40),0 0 12px rgba(0,0,0,0.16);'></div>
<div style='position:absolute;left:476.20px;top:161.00px;width:747.30px;height:26.50px;background:#0474d6;border-radius:8px 8px 0 0;border-top:1px solid #1565b0;border-bottom:1px solid #1466b2;box-sizing:border-box;'></div>
<div style='position:absolute;left:477.20px;top:187.50px;width:745.30px;height:1.00px;background:#f8fbfd;'></div>
<svg style='left:480.5px;top:166.5px' width='16' height='14' viewBox='0 0 16 14'>
<path d='M0.5 1 L5.5 1 L7 2.5 L15.5 2.5 L15.5 13.3 L0.5 13.3 Z' fill='#f0c040'/><path d='M0.5 4 L15.5 4 L15.5 13.3 L0.5 13.3 Z' fill='#fad45e'/>
<text x='5' y='12' font-size='7.5' font-family='Liberation Sans' fill='#a07818'>A</text></svg>
<div class=t style="left:502.40px;top:168px;font-size:13.51px;line-height:13.51px;color:#fff;font-family:'Liberation Sans',sans-serif;transform:scaleX(0.9228);transform-origin:0 0;">Font Read OK 2019 (2443 msek.)</div>
<svg style='left:1199px;top:168.5px' width='12' height='12' viewBox='0 0 12 12'><path d='M0.5 0.5 L11.5 11.5 M11.5 0.5 L0.5 11.5' stroke='#fff' stroke-width='1.3' fill='none'/></svg>
<div style='position:absolute;left:489.20px;top:200.40px;width:721.60px;height:178.20px;background:#fff;border:1px solid #a2a2a2;box-sizing:border-box;'></div>
<div style='position:absolute;left:562.30px;top:202.40px;width:1.00px;height:16.00px;background:#ececec;'></div>
<div style='position:absolute;left:634.00px;top:202.40px;width:1.00px;height:16.00px;background:#ececec;'></div>
<div style='position:absolute;left:707.50px;top:202.40px;width:1.00px;height:16.00px;background:#ececec;'></div>
<div style='position:absolute;left:779.00px;top:202.40px;width:1.00px;height:16.00px;background:#ececec;'></div>
<div class=t style="left:495.60px;top:205px;font-size:12.09px;line-height:12.09px;color:#1e1e1e;font-family:'Liberation Sans',sans-serif;transform:scaleX(0.9700);transform-origin:0 0;">Name-Reg</div>
<div class=t style="left:567.50px;top:205px;font-size:12.09px;line-height:12.09px;color:#1e1e1e;font-family:'Liberation Sans',sans-serif;transform:scaleX(0.9700);transform-origin:0 0;">Path</div>
<div class=t style="left:639.50px;top:205px;font-size:12.09px;line-height:12.09px;color:#1e1e1e;font-family:'Liberation Sans',sans-serif;transform:scaleX(0.9700);transform-origin:0 0;">Nr.</div>
<div class=t style="left:712.20px;top:205px;font-size:12.09px;line-height:12.09px;color:#1e1e1e;font-family:'Liberation Sans',sans-serif;transform:scaleX(0.9700);transform-origin:0 0;">Fonts</div>
<div class=t style="left:495.60px;top:223px;font-size:12.09px;line-height:12.09px;color:#1a1a1a;font-family:'Liberation Sans',sans-serif;transform:scaleX(0.9700);transform-origin:0 0;">AdobeDev...</div>
<div class=t style="left:567.50px;top:223px;font-size:12.09px;line-height:12.09px;color:#1a1a1a;font-family:'Liberation Sans',sans-serif;transform:scaleX(0.9700);transform-origin:0 0;">C:\Progra...</div>
<div class=t style="left:639.50px;top:223px;font-size:12.09px;line-height:12.09px;color:#1a1a1a;font-family:'Liberation Sans',sans-serif;transform:scaleX(0.9700);transform-origin:0 0;">1</div>
<div class=t style="left:712.20px;top:223px;font-size:12.09px;line-height:12.09px;color:#1a1a1a;font-family:'Liberation Sans',sans-serif;transform:scaleX(0.9700);transform-origin:0 0;">AdobeDev...</div>
<div class=t style="left:495.60px;top:239px;font-size:12.09px;line-height:12.09px;color:#1a1a1a;font-family:'Liberation Sans',sans-serif;transform:scaleX(0.9700);transform-origin:0 0;">AdobeDev...</div>
<div class=t style="left:567.50px;top:239px;font-size:12.09px;line-height:12.09px;color:#1a1a1a;font-family:'Liberation Sans',sans-serif;transform:scaleX(0.9700);transform-origin:0 0;">C:\Progra...</div>
<div class=t style="left:639.50px;top:239px;font-size:12.09px;line-height:12.09px;color:#1a1a1a;font-family:'Liberation Sans',sans-serif;transform:scaleX(0.9700);transform-origin:0 0;">2</div>
<div class=t style="left:712.20px;top:239px;font-size:12.09px;line-height:12.09px;color:#1a1a1a;font-family:'Liberation Sans',sans-serif;transform:scaleX(0.9700);transform-origin:0 0;">AdobeDev...</div>
<div class=t style="left:495.60px;top:256px;font-size:12.09px;line-height:12.09px;color:#1a1a1a;font-family:'Liberation Sans',sans-serif;transform:scaleX(0.9700);transform-origin:0 0;">AdobeDev...</div>
<div class=t style="left:567.50px;top:256px;font-size:12.09px;line-height:12.09px;color:#1a1a1a;font-family:'Liberation Sans',sans-serif;transform:scaleX(0.9700);transform-origin:0 0;">C:\Progra...</div>
<div class=t style="left:639.50px;top:256px;font-size:12.09px;line-height:12.09px;color:#1a1a1a;font-family:'Liberation Sans',sans-serif;transform:scaleX(0.9700);transform-origin:0 0;">3</div>
<div class=t style="left:712.20px;top:256px;font-size:12.09px;line-height:12.09px;color:#1a1a1a;font-family:'Liberation Sans',sans-serif;transform:scaleX(0.9700);transform-origin:0 0;">AdobeDev...</div>
<div class=t style="left:495.60px;top:273px;font-size:12.09px;line-height:12.09px;color:#1a1a1a;font-family:'Liberation Sans',sans-serif;transform:scaleX(0.9700);transform-origin:0 0;">AdobeDev...</div>
<div class=t style="left:567.50px;top:273px;font-size:12.09px;line-height:12.09px;color:#1a1a1a;font-family:'Liberation Sans',sans-serif;transform:scaleX(0.9700);transform-origin:0 0;">C:\Progra...</div>
<div class=t style="left:639.50px;top:273px;font-size:12.09px;line-height:12.09px;color:#1a1a1a;font-family:'Liberation Sans',sans-serif;transform:scaleX(0.9700);transform-origin:0 0;">4</div>
<div class=t style="left:712.20px;top:273px;font-size:12.09px;line-height:12.09px;color:#1a1a1a;font-family:'Liberation Sans',sans-serif;transform:scaleX(0.9700);transform-origin:0 0;">AdobeDev...</div>
<div class=t style="left:495.60px;top:289px;font-size:12.09px;line-height:12.09px;color:#1a1a1a;font-family:'Liberation Sans',sans-serif;transform:scaleX(0.9700);transform-origin:0 0;">Arial (True...</div>
<div class=t style="left:567.50px;top:289px;font-size:12.09px;line-height:12.09px;color:#1a1a1a;font-family:'Liberation Sans',sans-serif;transform:scaleX(0.9700);transform-origin:0 0;">arial.ttf</div>
<div class=t style="left:639.50px;top:289px;font-size:12.09px;line-height:12.09px;color:#1a1a1a;font-family:'Liberation Sans',sans-serif;transform:scaleX(0.9700);transform-origin:0 0;">5</div>
<div class=t style="left:712.20px;top:289px;font-size:12.09px;line-height:12.09px;color:#1a1a1a;font-family:'Liberation Sans',sans-serif;transform:scaleX(0.9700);transform-origin:0 0;">Arial</div>
<div class=t style="left:495.60px;top:306px;font-size:12.09px;line-height:12.09px;color:#1a1a1a;font-family:'Liberation Sans',sans-serif;transform:scaleX(0.9700);transform-origin:0 0;">Arial Black...</div>
<div class=t style="left:567.50px;top:306px;font-size:12.09px;line-height:12.09px;color:#1a1a1a;font-family:'Liberation Sans',sans-serif;transform:scaleX(0.9700);transform-origin:0 0;">ariblk.ttf</div>
<div class=t style="left:639.50px;top:306px;font-size:12.09px;line-height:12.09px;color:#1a1a1a;font-family:'Liberation Sans',sans-serif;transform:scaleX(0.9700);transform-origin:0 0;">6</div>
<div class=t style="left:712.20px;top:306px;font-size:12.09px;line-height:12.09px;color:#1a1a1a;font-family:'Liberation Sans',sans-serif;transform:scaleX(0.9700);transform-origin:0 0;">Arial Black</div>
<div class=t style="left:495.60px;top:322px;font-size:12.09px;line-height:12.09px;color:#1a1a1a;font-family:'Liberation Sans',sans-serif;transform:scaleX(0.9700);transform-origin:0 0;">Arial Bold ...</div>
<div class=t style="left:567.50px;top:322px;font-size:12.09px;line-height:12.09px;color:#1a1a1a;font-family:'Liberation Sans',sans-serif;transform:scaleX(0.9700);transform-origin:0 0;">arialbd.ttf</div>
<div class=t style="left:639.50px;top:322px;font-size:12.09px;line-height:12.09px;color:#1a1a1a;font-family:'Liberation Sans',sans-serif;transform:scaleX(0.9700);transform-origin:0 0;">7</div>
<div class=t style="left:712.20px;top:322px;font-size:12.09px;line-height:12.09px;color:#1a1a1a;font-family:'Liberation Sans',sans-serif;transform:scaleX(0.9700);transform-origin:0 0;">Arial Bold</div>
<div class=t style="left:495.60px;top:339px;font-size:12.09px;line-height:12.09px;color:#1a1a1a;font-family:'Liberation Sans',sans-serif;transform:scaleX(0.9700);transform-origin:0 0;">Arial Bold ...</div>
<div class=t style="left:567.50px;top:339px;font-size:12.09px;line-height:12.09px;color:#1a1a1a;font-family:'Liberation Sans',sans-serif;transform:scaleX(0.9700);transform-origin:0 0;">arialbi.ttf</div>
<div class=t style="left:639.50px;top:339px;font-size:12.09px;line-height:12.09px;color:#1a1a1a;font-family:'Liberation Sans',sans-serif;transform:scaleX(0.9700);transform-origin:0 0;">8</div>
<div class=t style="left:712.20px;top:339px;font-size:12.09px;line-height:12.09px;color:#1a1a1a;font-family:'Liberation Sans',sans-serif;transform:scaleX(0.9700);transform-origin:0 0;">Arial Bold...</div>
<div class=t style="left:495.60px;top:355px;font-size:12.09px;line-height:12.09px;color:#1a1a1a;font-family:'Liberation Sans',sans-serif;transform:scaleX(0.9700);transform-origin:0 0;">Arial Italic ...</div>
<div class=t style="left:567.50px;top:355px;font-size:12.09px;line-height:12.09px;color:#1a1a1a;font-family:'Liberation Sans',sans-serif;transform:scaleX(0.9700);transform-origin:0 0;">ariali.ttf</div>
<div class=t style="left:639.50px;top:355px;font-size:12.09px;line-height:12.09px;color:#1a1a1a;font-family:'Liberation Sans',sans-serif;transform:scaleX(0.9700);transform-origin:0 0;">9</div>
<div class=t style="left:712.20px;top:355px;font-size:12.09px;line-height:12.09px;color:#1a1a1a;font-family:'Liberation Sans',sans-serif;transform:scaleX(0.9700);transform-origin:0 0;">Arial Italic</div>
<div class=t style="left:495.60px;top:372px;font-size:12.09px;line-height:12.09px;color:#1a1a1a;font-family:'Liberation Sans',sans-serif;transform:scaleX(0.9700);transform-origin:0 0;">Arial Narr...</div>
<div class=t style="left:567.50px;top:372px;font-size:12.09px;line-height:12.09px;color:#1a1a1a;font-family:'Liberation Sans',sans-serif;transform:scaleX(0.9700);transform-origin:0 0;">ARIALN.T...</div>
<div class=t style="left:639.50px;top:372px;font-size:12.09px;line-height:12.09px;color:#1a1a1a;font-family:'Liberation Sans',sans-serif;transform:scaleX(0.9700);transform-origin:0 0;">10</div>
<div class=t style="left:712.20px;top:372px;font-size:12.09px;line-height:12.09px;color:#1a1a1a;font-family:'Liberation Sans',sans-serif;transform:scaleX(0.9700);transform-origin:0 0;">Arial Narr...</div>
<div style='position:absolute;left:489.20px;top:378.60px;width:721.80px;height:12.00px;background:#f0f0f0;'></div>
<div style='position:absolute;left:489.20px;top:377.60px;width:721.60px;height:1.00px;background:#a2a2a2;'></div>
<div style='position:absolute;left:1193.00px;top:201.40px;width:16.80px;height:176.20px;background:#f3f3f3;'></div>
<svg style='left:0;top:0' width='1' height='1'><path d='M1197.2 214.70000000000002 L1205.2 214.70000000000002 L1201.2 209.1 Z' fill='#8c8c8c' stroke='#8c8c8c' stroke-width='0.8' stroke-linejoin='round'/></svg>
<div style='position:absolute;left:1198.00px;top:220.70px;width:6.40px;height:18.30px;background:#8c8c8c;border-radius:3px;'></div>
<svg style='left:0;top:0' width='1' height='1'><path d='M1197.2 365.1 L1205.2 365.1 L1201.2 370.70000000000005 Z' fill='#8c8c8c' stroke='#8c8c8c' stroke-width='0.8' stroke-linejoin='round'/></svg>
<div style='position:absolute;left:489.20px;top:395.30px;width:721.60px;height:192.10px;background:#fff;border:1px solid #a2a2a2;box-sizing:border-box;'></div>
<div style='position:absolute;left:562.30px;top:397.30px;width:1.00px;height:16.00px;background:#ececec;'></div>
<div style='position:absolute;left:634.00px;top:397.30px;width:1.00px;height:16.00px;background:#ececec;'></div>
<div style='position:absolute;left:707.50px;top:397.30px;width:1.00px;height:16.00px;background:#ececec;'></div>
<div style='position:absolute;left:780.00px;top:397.30px;width:1.00px;height:16.00px;background:#ececec;'></div>
<div style='position:absolute;left:852.50px;top:397.30px;width:1.00px;height:16.00px;background:#ececec;'></div>
<div style='position:absolute;left:924.00px;top:397.30px;width:1.00px;height:16.00px;background:#ececec;'></div>
<div class=t style="left:495.60px;top:401px;font-size:12.09px;line-height:12.09px;color:#1e1e1e;font-family:'Liberation Sans',sans-serif;transform:scaleX(0.9700);transform-origin:0 0;">Name</div>
<div class=t style="left:567.50px;top:401px;font-size:12.09px;line-height:12.09px;color:#1e1e1e;font-family:'Liberation Sans',sans-serif;transform:scaleX(0.9700);transform-origin:0 0;">Path</div>
<div class=t style="left:639.60px;top:401px;font-size:12.09px;line-height:12.09px;color:#1e1e1e;font-family:'Liberation Sans',sans-serif;transform:scaleX(0.9700);transform-origin:0 0;">Nr.</div>
<div class=t style="left:712.20px;top:401px;font-size:12.09px;line-height:12.09px;color:#1e1e1e;font-family:'Liberation Sans',sans-serif;transform:scaleX(0.9700);transform-origin:0 0;">GDI++</div>
<div class=t style="left:784.70px;top:401px;font-size:12.09px;line-height:12.09px;color:#1e1e1e;font-family:'Liberation Sans',sans-serif;transform:scaleX(0.9700);transform-origin:0 0;">Handle</div>
<div class=t style="left:857.30px;top:401px;font-size:12.09px;line-height:12.09px;color:#1e1e1e;font-family:'Liberation Sans',sans-serif;transform:scaleX(0.9700);transform-origin:0 0;">OK</div>
<div class=t style="left:495.60px;top:418px;font-size:12.09px;line-height:12.09px;color:#1a1a1a;font-family:'Liberation Sans',sans-serif;transform:scaleX(0.9700);transform-origin:0 0;">Actay Light</div>
<div class=t style="left:567.50px;top:418px;font-size:12.09px;line-height:12.09px;color:#1a1a1a;font-family:'Liberation Sans',sans-serif;transform:scaleX(0.9700);transform-origin:0 0;">H:\A Mixt...</div>
<div class=t style="left:639.60px;top:418px;font-size:12.09px;line-height:12.09px;color:#1a1a1a;font-family:'Liberation Sans',sans-serif;transform:scaleX(0.9700);transform-origin:0 0;">1</div>
<div class=t style="left:712.20px;top:418px;font-size:12.09px;line-height:12.09px;color:#1a1a1a;font-family:'Liberation Sans',sans-serif;transform:scaleX(0.9700);transform-origin:0 0;">Yes: 1</div>
<div class=t style="left:784.70px;top:418px;font-size:12.09px;line-height:12.09px;color:#1a1a1a;font-family:'Liberation Sans',sans-serif;transform:scaleX(0.9700);transform-origin:0 0;">150997472</div>
<div class=t style="left:495.60px;top:435px;font-size:12.09px;line-height:12.09px;color:#1a1a1a;font-family:'Liberation Sans',sans-serif;transform:scaleX(0.9700);transform-origin:0 0;">Actay Light</div>
<div class=t style="left:567.50px;top:435px;font-size:12.09px;line-height:12.09px;color:#1a1a1a;font-family:'Liberation Sans',sans-serif;transform:scaleX(0.9700);transform-origin:0 0;">H:\A Mixt...</div>
<div class=t style="left:639.60px;top:435px;font-size:12.09px;line-height:12.09px;color:#1a1a1a;font-family:'Liberation Sans',sans-serif;transform:scaleX(0.9700);transform-origin:0 0;">2</div>
<div class=t style="left:712.20px;top:435px;font-size:12.09px;line-height:12.09px;color:#1a1a1a;font-family:'Liberation Sans',sans-serif;transform:scaleX(0.9700);transform-origin:0 0;">Yes: 1</div>
<div class=t style="left:784.70px;top:435px;font-size:12.09px;line-height:12.09px;color:#1a1a1a;font-family:'Liberation Sans',sans-serif;transform:scaleX(0.9700);transform-origin:0 0;">167774689</div>
<div class=t style="left:495.60px;top:451px;font-size:12.09px;line-height:12.09px;color:#1a1a1a;font-family:'Liberation Sans',sans-serif;transform:scaleX(0.9700);transform-origin:0 0;">Actay Con...</div>
<div class=t style="left:567.50px;top:451px;font-size:12.09px;line-height:12.09px;color:#1a1a1a;font-family:'Liberation Sans',sans-serif;transform:scaleX(0.9700);transform-origin:0 0;">H:\A Mixt...</div>
<div class=t style="left:639.60px;top:451px;font-size:12.09px;line-height:12.09px;color:#1a1a1a;font-family:'Liberation Sans',sans-serif;transform:scaleX(0.9700);transform-origin:0 0;">3</div>
<div class=t style="left:712.20px;top:451px;font-size:12.09px;line-height:12.09px;color:#1a1a1a;font-family:'Liberation Sans',sans-serif;transform:scaleX(0.9700);transform-origin:0 0;">Yes: 1</div>
<div class=t style="left:784.70px;top:451px;font-size:12.09px;line-height:12.09px;color:#1a1a1a;font-family:'Liberation Sans',sans-serif;transform:scaleX(0.9700);transform-origin:0 0;">184551906</div>
<div class=t style="left:495.60px;top:468px;font-size:12.09px;line-height:12.09px;color:#1a1a1a;font-family:'Liberation Sans',sans-serif;transform:scaleX(0.9700);transform-origin:0 0;">Actay Con...</div>
<div class=t style="left:567.50px;top:468px;font-size:12.09px;line-height:12.09px;color:#1a1a1a;font-family:'Liberation Sans',sans-serif;transform:scaleX(0.9700);transform-origin:0 0;">H:\A Mixt...</div>
<div class=t style="left:639.60px;top:468px;font-size:12.09px;line-height:12.09px;color:#1a1a1a;font-family:'Liberation Sans',sans-serif;transform:scaleX(0.9700);transform-origin:0 0;">4</div>
<div class=t style="left:712.20px;top:468px;font-size:12.09px;line-height:12.09px;color:#1a1a1a;font-family:'Liberation Sans',sans-serif;transform:scaleX(0.9700);transform-origin:0 0;">Yes: 1</div>
<div class=t style="left:784.70px;top:468px;font-size:12.09px;line-height:12.09px;color:#1a1a1a;font-family:'Liberation Sans',sans-serif;transform:scaleX(0.9700);transform-origin:0 0;">201329123</div>
<div class=t style="left:495.60px;top:485px;font-size:12.09px;line-height:12.09px;color:#1a1a1a;font-family:'Liberation Sans',sans-serif;transform:scaleX(0.9700);transform-origin:0 0;">Actay Wid...</div>
<div class=t style="left:567.50px;top:485px;font-size:12.09px;line-height:12.09px;color:#1a1a1a;font-family:'Liberation Sans',sans-serif;transform:scaleX(0.9700);transform-origin:0 0;">H:\A Mixt...</div>
<div class=t style="left:639.60px;top:485px;font-size:12.09px;line-height:12.09px;color:#1a1a1a;font-family:'Liberation Sans',sans-serif;transform:scaleX(0.9700);transform-origin:0 0;">5</div>
<div class=t style="left:712.20px;top:485px;font-size:12.09px;line-height:12.09px;color:#1a1a1a;font-family:'Liberation Sans',sans-serif;transform:scaleX(0.9700);transform-origin:0 0;">Yes: 1</div>
<div class=t style="left:784.70px;top:485px;font-size:12.09px;line-height:12.09px;color:#1a1a1a;font-family:'Liberation Sans',sans-serif;transform:scaleX(0.9700);transform-origin:0 0;">218106340</div>
<div class=t style="left:495.60px;top:501px;font-size:12.09px;line-height:12.09px;color:#1a1a1a;font-family:'Liberation Sans',sans-serif;transform:scaleX(0.9700);transform-origin:0 0;">Actay Wid...</div>
<div class=t style="left:567.50px;top:501px;font-size:12.09px;line-height:12.09px;color:#1a1a1a;font-family:'Liberation Sans',sans-serif;transform:scaleX(0.9700);transform-origin:0 0;">H:\A Mixt...</div>
<div class=t style="left:639.60px;top:501px;font-size:12.09px;line-height:12.09px;color:#1a1a1a;font-family:'Liberation Sans',sans-serif;transform:scaleX(0.9700);transform-origin:0 0;">6</div>
<div class=t style="left:712.20px;top:501px;font-size:12.09px;line-height:12.09px;color:#1a1a1a;font-family:'Liberation Sans',sans-serif;transform:scaleX(0.9700);transform-origin:0 0;">Yes: 1</div>
<div class=t style="left:784.70px;top:501px;font-size:12.09px;line-height:12.09px;color:#1a1a1a;font-family:'Liberation Sans',sans-serif;transform:scaleX(0.9700);transform-origin:0 0;">234883557</div>
<div class=t style="left:495.60px;top:518px;font-size:12.09px;line-height:12.09px;color:#1a1a1a;font-family:'Liberation Sans',sans-serif;transform:scaleX(0.9700);transform-origin:0 0;">Alana Pro ...</div>
<div class=t style="left:567.50px;top:518px;font-size:12.09px;line-height:12.09px;color:#1a1a1a;font-family:'Liberation Sans',sans-serif;transform:scaleX(0.9700);transform-origin:0 0;">H:\A Mixt...</div>
<div class=t style="left:639.60px;top:518px;font-size:12.09px;line-height:12.09px;color:#1a1a1a;font-family:'Liberation Sans',sans-serif;transform:scaleX(0.9700);transform-origin:0 0;">7</div>
<div class=t style="left:712.20px;top:518px;font-size:12.09px;line-height:12.09px;color:#1a1a1a;font-family:'Liberation Sans',sans-serif;transform:scaleX(0.9700);transform-origin:0 0;">Yes: 1</div>
<div class=t style="left:784.70px;top:518px;font-size:12.09px;line-height:12.09px;color:#1a1a1a;font-family:'Liberation Sans',sans-serif;transform:scaleX(0.9700);transform-origin:0 0;">251660774</div>
<div class=t style="left:495.60px;top:534px;font-size:12.09px;line-height:12.09px;color:#1a1a1a;font-family:'Liberation Sans',sans-serif;transform:scaleX(0.9700);transform-origin:0 0;">Alumni Sa...</div>
<div class=t style="left:567.50px;top:534px;font-size:12.09px;line-height:12.09px;color:#1a1a1a;font-family:'Liberation Sans',sans-serif;transform:scaleX(0.9700);transform-origin:0 0;">H:\A Mixt...</div>
<div class=t style="left:639.60px;top:534px;font-size:12.09px;line-height:12.09px;color:#1a1a1a;font-family:'Liberation Sans',sans-serif;transform:scaleX(0.9700);transform-origin:0 0;">8</div>
<div class=t style="left:712.20px;top:534px;font-size:12.09px;line-height:12.09px;color:#1a1a1a;font-family:'Liberation Sans',sans-serif;transform:scaleX(0.9700);transform-origin:0 0;">Yes: 1</div>
<div class=t style="left:784.70px;top:534px;font-size:12.09px;line-height:12.09px;color:#1a1a1a;font-family:'Liberation Sans',sans-serif;transform:scaleX(0.9700);transform-origin:0 0;">268437991</div>
<div class=t style="left:495.60px;top:551px;font-size:12.09px;line-height:12.09px;color:#1a1a1a;font-family:'Liberation Sans',sans-serif;transform:scaleX(0.9700);transform-origin:0 0;">Alumni Sa...</div>
<div class=t style="left:567.50px;top:551px;font-size:12.09px;line-height:12.09px;color:#1a1a1a;font-family:'Liberation Sans',sans-serif;transform:scaleX(0.9700);transform-origin:0 0;">H:\A Mixt...</div>
<div class=t style="left:639.60px;top:551px;font-size:12.09px;line-height:12.09px;color:#1a1a1a;font-family:'Liberation Sans',sans-serif;transform:scaleX(0.9700);transform-origin:0 0;">9</div>
<div class=t style="left:712.20px;top:551px;font-size:12.09px;line-height:12.09px;color:#1a1a1a;font-family:'Liberation Sans',sans-serif;transform:scaleX(0.9700);transform-origin:0 0;">Yes: 1</div>
<div class=t style="left:784.70px;top:551px;font-size:12.09px;line-height:12.09px;color:#1a1a1a;font-family:'Liberation Sans',sans-serif;transform:scaleX(0.9700);transform-origin:0 0;">285215208</div>
<div class=t style="left:495.60px;top:568px;font-size:12.09px;line-height:12.09px;color:#1a1a1a;font-family:'Liberation Sans',sans-serif;transform:scaleX(0.9700);transform-origin:0 0;">Alumni Sans</div>
<div class=t style="left:567.50px;top:568px;font-size:12.09px;line-height:12.09px;color:#1a1a1a;font-family:'Liberation Sans',sans-serif;transform:scaleX(0.9700);transform-origin:0 0;">H:\A Mixt...</div>
<div class=t style="left:639.60px;top:568px;font-size:12.09px;line-height:12.09px;color:#1a1a1a;font-family:'Liberation Sans',sans-serif;transform:scaleX(0.9700);transform-origin:0 0;">10</div>
<div class=t style="left:712.20px;top:568px;font-size:12.09px;line-height:12.09px;color:#1a1a1a;font-family:'Liberation Sans',sans-serif;transform:scaleX(0.9700);transform-origin:0 0;">Yes: 1</div>
<div class=t style="left:784.70px;top:568px;font-size:12.09px;line-height:12.09px;color:#1a1a1a;font-family:'Liberation Sans',sans-serif;transform:scaleX(0.9700);transform-origin:0 0;">83888617</div>
<div class=t style="left:495.60px;top:584px;font-size:12.09px;line-height:12.09px;color:#1a1a1a;font-family:'Liberation Sans',sans-serif;transform:scaleX(0.9700);transform-origin:0 0;">Alumni Sa...</div>
<div class=t style="left:567.50px;top:584px;font-size:12.09px;line-height:12.09px;color:#1a1a1a;font-family:'Liberation Sans',sans-serif;transform:scaleX(0.9700);transform-origin:0 0;">H:\A Mixt...</div>
<div class=t style="left:639.60px;top:584px;font-size:12.09px;line-height:12.09px;color:#1a1a1a;font-family:'Liberation Sans',sans-serif;transform:scaleX(0.9700);transform-origin:0 0;">11</div>
<div class=t style="left:712.20px;top:584px;font-size:12.09px;line-height:12.09px;color:#1a1a1a;font-family:'Liberation Sans',sans-serif;transform:scaleX(0.9700);transform-origin:0 0;">Yes: 1</div>
<div class=t style="left:784.70px;top:584px;font-size:12.09px;line-height:12.09px;color:#1a1a1a;font-family:'Liberation Sans',sans-serif;transform:scaleX(0.9700);transform-origin:0 0;">100665834</div>
<div style='position:absolute;left:489.20px;top:587.40px;width:721.80px;height:12.00px;background:#f0f0f0;'></div>
<div style='position:absolute;left:489.20px;top:586.40px;width:721.60px;height:1.00px;background:#a2a2a2;'></div>
<div style='position:absolute;left:1193.00px;top:396.30px;width:16.80px;height:190.10px;background:#f3f3f3;'></div>
<svg style='left:0;top:0' width='1' height='1'><path d='M1197.2 409.6 L1205.2 409.6 L1201.2 404.0 Z' fill='#8c8c8c' stroke='#8c8c8c' stroke-width='0.8' stroke-linejoin='round'/></svg>
<div style='position:absolute;left:1198.00px;top:416.80px;width:6.40px;height:18.20px;background:#8c8c8c;border-radius:3px;'></div>
<svg style='left:0;top:0' width='1' height='1'><path d='M1197.2 573.9 L1205.2 573.9 L1201.2 579.4999999999999 Z' fill='#8c8c8c' stroke='#8c8c8c' stroke-width='0.8' stroke-linejoin='round'/></svg>
<div style='position:absolute;left:490.00px;top:599.80px;width:721.00px;height:25.00px;background:#fdfdfd;border:1px solid #e6e6e6;border-bottom:1px solid #a2a2a2;box-sizing:border-box;border-radius:3px 3px 0 0;'></div>
<div style='position:absolute;left:490.30px;top:629.20px;width:720.30px;height:48.20px;background:#fbfbfb;border:1px solid #e2e2e2;border-bottom-color:#cdcdcd;box-sizing:border-box;border-radius:4px;'></div>
<div class=t style="left:829.46px;top:649px;font-size:11.81px;line-height:11.81px;color:#1a1a1a;font-family:'Liberation Sans',sans-serif;">Button1</div>
<div style='position:absolute;left:490.00px;top:679.60px;width:494.00px;height:34.70px;background:#fdfdfd;border:1px solid #ececec;border-bottom:1px solid #a2a2a2;box-sizing:border-box;'></div>
<div class=t style="left:494.08px;top:683px;font-size:12.23px;line-height:12.23px;color:#1a1a1a;font-family:'Liberation Sans',sans-serif;transform:scaleX(1.0215);transform-origin:0 0;">Gdi++: 1532 / 1532</div>
<div style='position:absolute;left:1028.00px;top:685.70px;width:79.00px;height:22.10px;background:#fdfdfd;border:1px solid #d3d3d3;border-bottom-color:#bcbcbc;box-sizing:border-box;border-radius:4px;'></div>
<div class=t style="left:1040.30px;top:693px;font-size:11.95px;line-height:11.95px;color:#1a1a1a;font-family:'Liberation Sans',sans-serif;transform:scaleX(0.9471);transform-origin:0 0;">Abbrechen</div>
<div style='position:absolute;left:1130.40px;top:687.30px;width:80.40px;height:22.50px;background:#fdfdfd;border:1px solid #6b7580;box-sizing:border-box;border-radius:4px;'></div>
<div class=t style="left:1162.77px;top:695px;font-size:11.95px;line-height:11.95px;color:#1a1a1a;font-family:'Liberation Sans',sans-serif;transform:scaleX(0.9100);transform-origin:0 0;">OK</div>
</body></html>
